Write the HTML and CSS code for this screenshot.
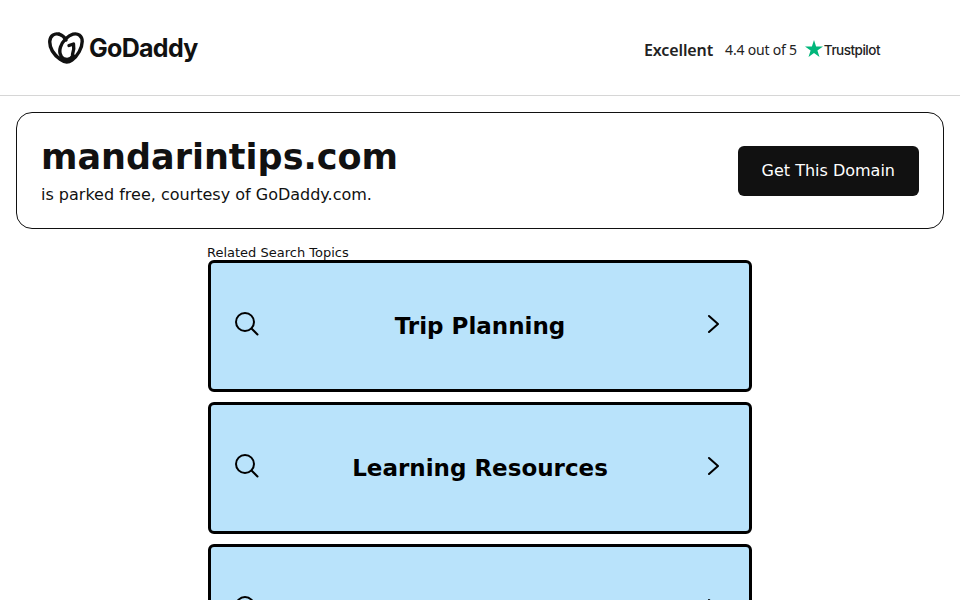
FILE: index.html
```html
<!DOCTYPE html>
<html lang="en">
<head>
    <meta charset="UTF-8">
    <meta name="viewport" content="width=device-width, initial-scale=1.0">
    <title>mandarintips.com</title>
    <link rel="stylesheet" href="styles.css">
</head>
<body>
    <header class="top-bar">
        <div class="logo">
            <svg class="logo-heart" width="36" height="32" viewBox="0 0 36 32" fill="none" stroke="#111" stroke-width="3.4" stroke-linecap="round" stroke-linejoin="round">
                <path d="M11 2.200C6.500 .9 2.200 3.600 1.800 9c-.4 6 3.500 13.200 10.500 18.500 4 3 8 3.200 11.700 .6C29.500 24.200 34.200 16 34.200 9.500 34.200 3.800 29.800 .8 25 2.200 20 3.700 14.500 9 12.500 15c-1.500 4.500 -.5 9.500 3 11.500 3.500 1.800 7.500 .5 9.500 -3"/>
                <path d="M11 2.200c3 .9 5.500 3 7 5.800"/>
                <path d="M21 13.500l4.500 -1.500c.7 3.500 .3 7 -1 10.500"/>
            </svg>
            <span class="logo-text">GoDaddy</span>
        </div>
        <div class="rating">
            <span class="rating-label">Excellent</span>
            <span class="rating-score">4.4 out of 5</span>
            <svg class="tp-star" width="18" height="17" viewBox="0 0 18 17"><polygon fill="#00b67a" points="9,0 11.100,6.400 18,6.400 12.400,10.400 14.500,17 9,12.900 3.500,17 5.600,10.400 0,6.400 6.900,6.400"/></svg>
            <span class="tp-name">Trustpilot</span>
        </div>
    </header>

    <section class="domain-card">
        <div>
            <h1 class="domain-name">mandarintips.com</h1>
            <p class="domain-note">is parked free, courtesy of GoDaddy.com.</p>
        </div>
        <a class="domain-btn" href="#">Get This Domain</a>
    </section>

    <main class="topics">
        <div class="topics-title">Related Search Topics</div>
        <a class="topic" href="#">
            <span class="topic-side">
                <svg width="24" height="24" viewBox="0 0 24 24" fill="none" stroke="#000" stroke-width="2" stroke-linecap="round"><circle cx="10" cy="10" r="9"/><line x1="16.500" y1="16.500" x2="22.500" y2="22.500"/></svg>
            </span>
            <span class="topic-text">Trip Planning</span>
            <span class="topic-side topic-side-right">
                <svg width="12" height="20" viewBox="0 0 12 20" fill="none" stroke="#000" stroke-width="2" stroke-linecap="round" stroke-linejoin="round"><polyline points="2,2 11,10 2,18"/></svg>
            </span>
        </a>
        <a class="topic" href="#">
            <span class="topic-side">
                <svg width="24" height="24" viewBox="0 0 24 24" fill="none" stroke="#000" stroke-width="2" stroke-linecap="round"><circle cx="10" cy="10" r="9"/><line x1="16.500" y1="16.500" x2="22.500" y2="22.500"/></svg>
            </span>
            <span class="topic-text">Learning Resources</span>
            <span class="topic-side topic-side-right">
                <svg width="12" height="20" viewBox="0 0 12 20" fill="none" stroke="#000" stroke-width="2" stroke-linecap="round" stroke-linejoin="round"><polyline points="2,2 11,10 2,18"/></svg>
            </span>
        </a>
        <a class="topic" href="#">
            <span class="topic-side">
                <svg width="24" height="24" viewBox="0 0 24 24" fill="none" stroke="#000" stroke-width="2" stroke-linecap="round"><circle cx="10" cy="10" r="9"/><line x1="16.500" y1="16.500" x2="22.500" y2="22.500"/></svg>
            </span>
            <span class="topic-text"></span>
            <span class="topic-side topic-side-right">
                <svg width="12" height="20" viewBox="0 0 12 20" fill="none" stroke="#000" stroke-width="2" stroke-linecap="round" stroke-linejoin="round"><polyline points="2,2 11,10 2,18"/></svg>
            </span>
        </a>
    </main>
</body>
</html>
```

FILE: styles.css
```css
body {
    margin: 0;
    font-family: "DejaVu Sans", sans-serif;
    color: #111;
    background-color: #fff;
    height: 600px;
    overflow: hidden;
}
.top-bar {
    display: flex;
    justify-content: space-between;
    align-items: center;
    height: 95px;
    padding: 0 80px 0 48px;
    border-bottom: 1px solid #d6d6d6;
}
.logo {
    display: flex;
    align-items: center;
    gap: 5px;
}
.logo-text {
    font-family: "Inter", sans-serif;
    font-size: 25px;
    font-weight: 700;
    letter-spacing: -0.7px;
}
.rating {
    display: flex;
    align-items: center;
    padding-top: 4px;
    font-family: "Noto Sans", sans-serif;
    color: #222;
}
.rating-label {
    font-size: 16px;
    font-weight: 600;
    letter-spacing: -0.1px;
    margin-right: 12px;
}
.rating-score {
    font-size: 14px;
    letter-spacing: -0.2px;
    margin-right: 8px;
}
.tp-star {
    margin-top: -3px;
}
.tp-name {
    font-family: "Inter", sans-serif;
    font-size: 13.500px;
    font-weight: 500;
    letter-spacing: -0.5px;
    margin-left: 1px;
}
.domain-card {
    display: flex;
    justify-content: space-between;
    align-items: center;
    height: 117px;
    box-sizing: border-box;
    margin: 16px 16px 0;
    padding: 0 24px;
    border: 1px solid #111;
    border-radius: 16px;
}
.domain-name {
    margin: 0;
    font-size: 35px;
    font-weight: 700;
    line-height: 44px;
}
.domain-note {
    margin: 5px 0 0;
    font-size: 16px;
    line-height: 22px;
}
.domain-btn {
    display: block;
    padding: 0 24px;
    line-height: 50px;
    font-size: 16px;
    color: #fff;
    background-color: #111;
    border-radius: 6px;
    text-decoration: none;
}
.topics {
    width: 544px;
    margin: 16px auto 0;
}
.topics-title {
    font-size: 13px;
    line-height: 15px;
    margin-left: -1px;
}
.topic {
    display: flex;
    align-items: center;
    box-sizing: border-box;
    height: 132px;
    margin-bottom: 10px;
    padding: 0 24px;
    background-color: #b9e3fb;
    border: 3px solid #000;
    border-radius: 6px;
    color: #000;
    text-decoration: none;
}
.topic-side {
    display: flex;
    flex: 1;
    margin-bottom: 5px;
}
.topic-side-right {
    justify-content: flex-end;
}
.topic-side-right svg {
    margin-right: 6px;
}
.topic-text {
    font-size: 23px;
    font-weight: 700;
}
```
